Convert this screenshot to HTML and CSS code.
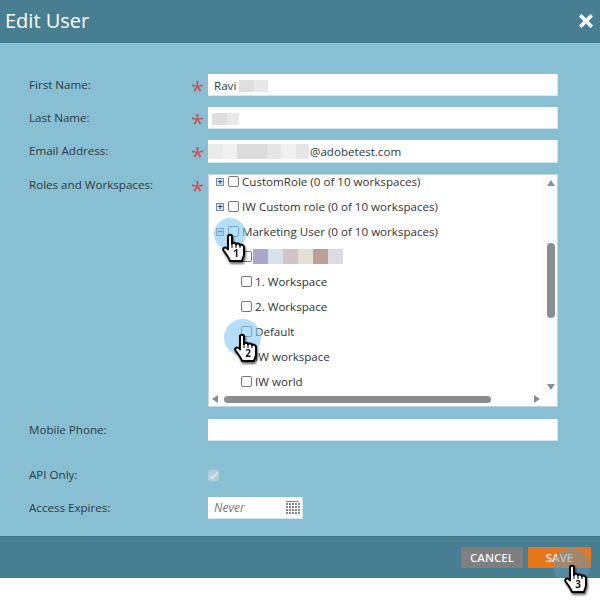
FILE: index.html
```html
<!DOCTYPE html>
<html lang="en">
<head>
  <meta charset="UTF-8">
  <meta name="viewport" content="width=device-width, initial-scale=1.0">
  <title>Edit User</title>
  <link rel="stylesheet" href="styles.css">
</head>
<body>
  <svg class="defs" width="0" height="0">
    <symbol id="hand" viewBox="0 0 24 30">
      <path fill="#fff" stroke="#000" stroke-width="2" stroke-linejoin="round" d="M6 3.2C6 1.2 10 1.2 10 3.2V11C10 9.4 14 9.4 14 11.5C14 10 18 10 18 12.5C18 11 22 11.4 22 14V21C22 24 20.6 25 20 28H8C7 25 5 22 1.5 17.5C0 15 3.4 13 6 16.4Z"/>
      <path fill="none" stroke="#000" stroke-width="1" d="M10 11V15M14 11.5V15M18 12.5V15"/>
    </symbol>
  </svg>

  <div class="dialog">
    <header class="dialog-head">
      <h1>Edit User</h1>
      <svg class="close" width="14" height="14" viewBox="0 0 14 14"><path d="M2.5 2.5L11.5 11.5M11.5 2.5L2.5 11.5" stroke="#fff" stroke-width="3.6" stroke-linecap="square"/></svg>
    </header>

    <form class="dialog-body">
      <div class="row">
        <label>First Name:</label><span class="req">*</span>
        <div class="input">Ravi <i class="blur b1"></i><i class="blur b2"></i></div>
      </div>
      <div class="row">
        <label>Last Name:</label><span class="req">*</span>
        <div class="input"><i class="blur b1 first"></i><i class="blur b3"></i></div>
      </div>
      <div class="row row-email">
        <label>Email Address:</label><span class="req">*</span>
        <div class="input input-email"><i class="blur e1"></i><i class="blur e2"></i><i class="blur e3"></i><i class="blur e4"></i><i class="blur e5"></i><i class="blur e6"></i>@adobetest.com</div>
      </div>
      <div class="row row-tree">
        <label>Roles and Workspaces:</label><span class="req">*</span>
        <div class="tree">
          <ul class="tree-list">
            <li><span class="exp">+</span><span class="cb"></span>CustomRole (0 of 10 workspaces)</li>
            <li><span class="exp">+</span><span class="cb"></span>IW Custom role (0 of 10 workspaces)</li>
            <li><span class="exp">&minus;</span><span class="cb"></span>Marketing User (0 of 10 workspaces)</li>
            <li class="child"><span class="cb"></span><span class="swatches"><i class="s1"></i><i class="s2"></i><i class="s3"></i><i class="s4"></i><i class="s5"></i><i class="s6"></i></span></li>
            <li class="child"><span class="cb"></span>1. Workspace</li>
            <li class="child"><span class="cb"></span>2. Workspace</li>
            <li class="child"><span class="cb"></span>Default</li>
            <li class="child"><span class="cb"></span>IW workspace</li>
            <li class="child"><span class="cb"></span>IW world</li>
          </ul>
          <div class="vbar">
            <span class="arrow up"></span>
            <span class="vthumb"></span>
            <span class="arrow down"></span>
          </div>
          <div class="hbar">
            <span class="arrow left"></span>
            <span class="hthumb"></span>
            <span class="arrow right"></span>
          </div>
        </div>
      </div>
      <div class="row row-mobile">
        <label>Mobile Phone:</label><span class="req"></span>
        <div class="input"></div>
      </div>
      <div class="row row-api">
        <label>API Only:</label><span class="req"></span>
        <span class="api-check"><svg width="11" height="11" viewBox="0 0 11 11"><path d="M1.5 6L4.2 8.6L9.5 2.2" fill="none" stroke="#d5e6ec" stroke-width="2"/></svg></span>
      </div>
      <div class="row">
        <label>Access Expires:</label><span class="req"></span>
        <div class="input input-date">
          <em>Never</em>
          <span class="cal"><i></i><i></i><i></i><i></i><i></i><i></i><i></i><i></i><i></i><i></i><i></i><i></i><i></i><i></i><i></i><i></i><i></i><i></i><i></i><i></i></span>
        </div>
      </div>
    </form>

    <footer class="dialog-foot">
      <button type="button" class="btn btn-cancel">CANCEL</button>
      <button type="button" class="btn btn-save">SAVE</button>
      <span class="spot spot-3"></span>
    </footer>
  </div>

  <!-- step markers sit over the form -->
  <span class="spot spot-1"></span>
  <span class="spot spot-2"></span>
  <div class="pointer p1"><svg width="24" height="30"><use href="#hand"/></svg><b>1</b></div>
  <div class="pointer p2"><svg width="24" height="30"><use href="#hand"/></svg><b>2</b></div>
  <div class="pointer p3"><svg width="24" height="30"><use href="#hand"/></svg><b>3</b></div>
</body>
</html>
```

FILE: styles.css
```css
* { box-sizing: border-box; }
html, body {
  margin: 0;
  height: 600px;
  overflow: hidden;
  background: #fff;
}
body {
  position: relative;
  font-family: "Open Sans", "Liberation Sans", sans-serif;
  font-size: 11.6px;
  color: #2b3a42;
}
.defs { position: absolute; }

.dialog {
  height: 578px;
  display: flex;
  flex-direction: column;
  background: #89bfd2;
}
.dialog-head {
  height: 43px;
  flex: none;
  display: flex;
  align-items: center;
  justify-content: space-between;
  padding: 0 7px 1px 5px;
  background: #477e92;
  border-bottom: 1px solid #41778b;
}
.dialog-head h1 {
  margin: 0;
  font-size: 20px;
  font-weight: 400;
  color: #fff;
}

.dialog-body {
  flex: 1;
  padding: 31px 0 0 29px;
}
.row {
  display: flex;
  margin-bottom: 11px;
}
.row label {
  width: 160px;
  flex: none;
  padding-top: 2px;
  line-height: 17px;
}
.req {
  width: 19px;
  flex: none;
  padding-left: 2px;
  color: #c8525a;
  font-size: 24px;
  line-height: 32px;
  height: 22px;
}
.input {
  width: 350px;
  height: 22px;
  padding-left: 6px;
  line-height: 23px;
  background: #fff;
  border: 1px solid #d6e8ee;
  border-width: 0 1px 1px 0;
}
.row-email .input {
  height: 23px;
  padding-left: 0;
  display: flex;
  align-items: center;
  line-height: 25px;
}

.blur {
  display: inline-block;
  height: 12px;
  vertical-align: -2px;
}
.b1 { width: 15px; background: #dedede; }
.b2 { width: 14px; background: #e8e8e8; }
.b3 { width: 12px; background: #e8e8e8; }
.first { margin-left: -2px; }
.e1 { width: 14px; height: 15px; background: #ebebeb; }
.e2 { width: 15px; height: 15px; background: #f0f0f0; }
.e3 { width: 30px; height: 15px; background: #dcdcdc; }
.e4 { width: 14px; height: 15px; background: #e5e5e5; }
.e5 { width: 15px; height: 15px; background: #f0f0f0; }
.e6 { width: 13px; height: 15px; margin-right: 1px; background: #e6e6e6; }

.row-tree { height: 233px; }
.tree {
  width: 350px;
  height: 233px;
  display: grid;
  grid-template-columns: 1fr 14px;
  grid-template-rows: 1fr 12px;
  background: #fff;
  border: 1px solid #c5d3da;
}
.tree-list {
  margin: 0;
  padding: 0 0 0 7px;
  list-style: none;
  overflow: hidden;
}
.tree-list li {
  height: 25px;
  display: flex;
  align-items: center;
  white-space: nowrap;
  color: #333;
}
.tree-list li:first-child { margin-top: -6px; }
.tree-list li.child { padding-left: 25px; }
.exp {
  width: 8px;
  height: 8px;
  margin-right: 4px;
  background: #dfe3ea;
  border: 1px solid #7d8ca6;
  color: #33456b;
  font-size: 9px;
  font-weight: 700;
  line-height: 6px;
  text-align: center;
}
.cb {
  width: 11px;
  height: 11px;
  flex: none;
  margin-right: 3px;
  background: #fff;
  border: 1px solid #777;
  border-radius: 2px;
}
.swatches { display: flex; margin-left: -2px; }
.swatches i { width: 15px; height: 15px; }
.s1 { background: #aaa8c8; }
.s2 { background: #d5e2ea; }
.s3 { background: #d3c3c8; }
.s4 { background: #e6dfd8; }
.s5 { background: #bb9f98; }
.s6 { background: #dedbe3; }

.vbar {
  display: flex;
  flex-direction: column;
  align-items: center;
  padding: 5px 0 4px 2px;
  background: #fcfcfc;
}
.vthumb {
  width: 8px;
  height: 75px;
  margin-top: 57px;
  margin-bottom: auto;
  border-radius: 4px;
  background: #8c8c8c;
}
.hbar {
  grid-column: 1 / 3;
  display: flex;
  align-items: center;
  padding: 0 0 2px 3px;
}
.hthumb {
  width: 267px;
  height: 7px;
  margin-left: 6px;
  border-radius: 4px;
  background: #8c8c8c;
}
.arrow { width: 0; height: 0; flex: none; border-style: solid; border-color: transparent; }
.up { border-width: 0 4px 6px; border-bottom-color: #8c8c8c; }
.down { border-width: 6px 4px 0; border-top-color: #8c8c8c; }
.left { border-width: 4px 6px 4px 0; border-right-color: #8c8c8c; }
.right { margin-left: 43px; border-width: 4px 0 4px 6px; border-left-color: #8c8c8c; }

.row-mobile { margin: 12px 0 0; }
.row-api { margin: 23px 0 0; height: 33px; }
.api-check {
  width: 11px;
  height: 11px;
  margin-top: 6px;
  background: #aecfdb;
  border-radius: 2px;
  display: flex;
}
.input-date {
  width: 95px;
  display: flex;
  align-items: center;
  justify-content: space-between;
  padding-right: 3px;
}
.input-date em { color: #777; font-size: 12px; }
.cal {
  width: 13px;
  display: grid;
  grid-template-columns: repeat(5, 2px);
  gap: 1px;
  border-top: 1px solid #8a8a8a;
  padding-top: 1px;
}
.cal i { height: 2px; background: #8a8a8a; }

.dialog-foot {
  position: relative;
  height: 42px;
  flex: none;
  display: flex;
  justify-content: flex-end;
  gap: 5px;
  padding: 10px 9px 0 0;
  overflow: hidden;
  background: #477e92;
  border-top: 1px solid #41778b;
}
.btn {
  height: 21px;
  padding: 0;
  border: 0;
  color: #f4f4f4;
  font-family: inherit;
  font-size: 11.5px;
  font-weight: 600;
}
.btn-cancel { width: 62px; background: #7f7f7f; }
.btn-save { width: 63px; background: #e8761b; }

.spot {
  position: absolute;
  border-radius: 50%;
  background: rgba(130, 198, 241, .6);
}
.spot-1 { left: 214px; top: 218px; width: 32px; height: 32px; }
.spot-2 { left: 224px; top: 319px; width: 37px; height: 37px; }
.spot-3 { left: 553px; top: 11px; width: 37px; height: 37px; background: rgba(100, 150, 185, .5); }

.pointer {
  position: absolute;
  width: 24px;
  height: 30px;
  filter: drop-shadow(1px 2px 1px rgba(0, 0, 0, .6));
}
.pointer svg { display: block; }
.pointer b {
  position: absolute;
  left: 8px;
  top: 14px;
  width: 12px;
  font-size: 10px;
  line-height: 12px;
  text-align: center;
  color: #111;
}
.p1 { left: 222px; top: 233px; }
.p2 { left: 234px; top: 333px; }
.p3 { left: 564px; top: 564px; }
```
